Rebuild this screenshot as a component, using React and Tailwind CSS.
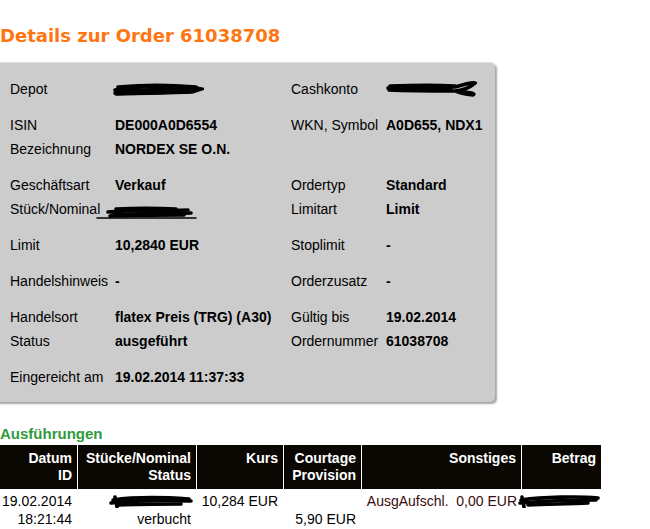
const LEFT = [
  [
    { l: 'Depot', v: 'scribble-depot', l2: 'Cashkonto', v2: 'scribble-cash' },
  ],
  [
    { l: 'ISIN', v: 'DE000A0D6554', l2: 'WKN, Symbol', v2: 'A0D655, NDX1' },
    { l: 'Bezeichnung', v: 'NORDEX SE O.N.', l2: '', v2: '' },
  ],
  [
    { l: 'Geschäftsart', v: 'Verkauf', l2: 'Ordertyp', v2: 'Standard' },
    { l: 'Stück/Nominal', v: 'scribble-stueck', l2: 'Limitart', v2: 'Limit' },
  ],
  [{ l: 'Limit', v: '10,2840 EUR', l2: 'Stoplimit', v2: '-' }],
  [{ l: 'Handelshinweis', v: '-', l2: 'Orderzusatz', v2: '-' }],
  [
    { l: 'Handelsort', v: 'flatex Preis (TRG) (A30)', l2: 'Gültig bis', v2: '19.02.2014' },
    { l: 'Status', v: 'ausgeführt', l2: 'Ordernummer', v2: '61038708' },
  ],
  [{ l: 'Eingereicht am', v: '19.02.2014 11:37:33', l2: '', v2: '' }],
];

// redaction scribbles, drawn as thick pen strokes
const SCRIBBLES = {
  a: [
    'M3 9 C20 6 50 5 80 6 L89 8 L80 11 C55 12 25 13 3 12',
    'M6 6 C30 4 60 4 84 6',
    'M4 10 C30 9 60 8 84 8',
    'M4 13 C30 12 55 11 76 11',
  ],
  b: [
    'M3 8 C25 6 55 6 70 7 C80 4 88 2 90 3 C84 8 76 11 70 11 C80 12 92 13 88 15 C78 14 72 12 70 11 C50 11 25 11 4 10',
    'M5 6 C30 5 55 5 70 6',
    'M8 9 L66 9',
  ],
  c: [
    'M1 14 L100 14',
    'M12 8 C35 6 60 7 92 6',
    'M16 11 C40 9 70 10 95 9',
    'M20 5 C40 4 60 4 80 5',
    'M14 12 C40 11 70 11 88 11',
  ],
  d: [
    'M4 6 C25 3 50 3 80 5',
    'M2 9 C20 7 45 6 82 7',
    'M10 11 C30 10 55 10 72 10',
    'M6 3 L8 13',
  ],
  e: [
    'M3 6 C25 3 60 2 80 4',
    'M2 9 C25 7 55 6 78 6',
    'M10 11 C30 10 50 10 70 9',
    'M4 3 L6 13',
  ],
};

function Scribble({ w = 90, h = 16, variant = 'a' }) {
  return (
    <svg width={w} height={h} viewBox={`0 0 ${w} ${h}`} className="block">
      {SCRIBBLES[variant].map((d, i) => (
        <path
          key={i}
          d={d}
          fill="none"
          stroke="#000"
          strokeWidth={i === 0 && variant === 'c' ? 1.5 : 3.6}
          strokeLinecap="round"
        />
      ))}
    </svg>
  );
}

function Value({ v }) {
  if (v === 'scribble-depot') return <div className="-ml-[3px]"><Scribble w={92} h={16} variant="a" /></div>;
  if (v === 'scribble-cash') return <div className="-ml-[1px]"><Scribble w={92} h={18} variant="b" /></div>;
  if (v === 'scribble-stueck') return <div className="-ml-[19px] mt-[6px]"><Scribble w={104} h={16} variant="c" /></div>;
  return <span className="font-bold text-[14px]">{v}</span>;
}

export default function App() {
  return (
    <div className="w-[650px] h-[529px] overflow-hidden bg-white text-black font-['Liberation_Sans',Arial,sans-serif]">
      <h1 className="pt-[24px] h-[48px] leading-[24px] text-[18px] font-bold text-[#ff7510] font-['DejaVu_Sans',Verdana,sans-serif]">
        Details zur Order 61038708
      </h1>

      <div className="mt-[14px] -ml-[6px] w-[501px] rounded-[5px] bg-[#cccccc] border-t border-[#e2e2e2] shadow-[2px_2px_2px_#a6a6a6] pt-[14px] pb-[13px] pl-[16px]">
        {LEFT.map((group, gi) => (
          <div key={gi} className={gi === 0 ? '' : 'mt-[12px]'}>
            {group.map((r, ri) => (
              <div key={ri} className="flex h-[24px] items-center text-[14px]">
                <div className="w-[105px] shrink-0 whitespace-nowrap">{r.l}</div>
                <div className="w-[176px] shrink-0 whitespace-nowrap"><Value v={r.v} /></div>
                <div className="w-[95px] shrink-0 whitespace-nowrap">{r.l2}</div>
                <div className="whitespace-nowrap"><Value v={r.v2} /></div>
              </div>
            ))}
          </div>
        ))}
      </div>

      <h2 className="mt-[22px] h-[20px] leading-[20px] text-[15px] font-bold text-[#2f9a3a]">Ausführungen</h2>

      <div className="mt-[1px] w-[602px] grid grid-cols-[77px_118px_86px_77px_159px_79px] gap-x-[1px] bg-white">
        {[
          ['Datum', 'ID'],
          ['Stücke/Nominal', 'Status'],
          ['Kurs', ''],
          ['Courtage', 'Provision'],
          ['Sonstiges', ''],
          ['Betrag', ''],
        ].map(([a, b], i) => (
          <div key={i} className="h-[44px] bg-[#0b0804] text-white font-bold text-[14px] leading-[17px] text-right pr-[5px] pt-[5px] whitespace-nowrap">
            <div>{a}</div>
            <div>{b}</div>
          </div>
        ))}

        <div className="text-[14px] leading-[18px] text-right pr-[5px] pt-[3px] whitespace-nowrap">
          <div>19.02.2014</div>
          <div>18:21:44</div>
        </div>
        <div className="text-[14px] leading-[18px] text-right pr-[5px] pt-[3px]">
          <div className="flex justify-end h-[18px] items-center -mr-[2px]"><Scribble w={84} h={14} variant="d" /></div>
          <div>verbucht</div>
        </div>
        <div className="text-[14px] leading-[18px] text-right pr-[5px] pt-[3px] whitespace-nowrap">
          <div>10,284 EUR</div>
        </div>
        <div className="text-[14px] leading-[18px] text-right pr-[5px] pt-[3px] whitespace-nowrap">
          <div>&nbsp;</div>
          <div>5,90 EUR</div>
        </div>
        <div className="text-[14px] leading-[18px] text-right pr-[4px] pt-[3px] text-[#3a0b0e] whitespace-nowrap">
          <div>AusgAufschl.&nbsp; 0,00 EUR</div>
        </div>
        <div className="text-[14px] leading-[18px] pt-[3px] -ml-[4px]">
          <div className="h-[18px] flex items-center"><Scribble w={82} h={14} variant="e" /></div>
        </div>
      </div>
    </div>
  );
}
